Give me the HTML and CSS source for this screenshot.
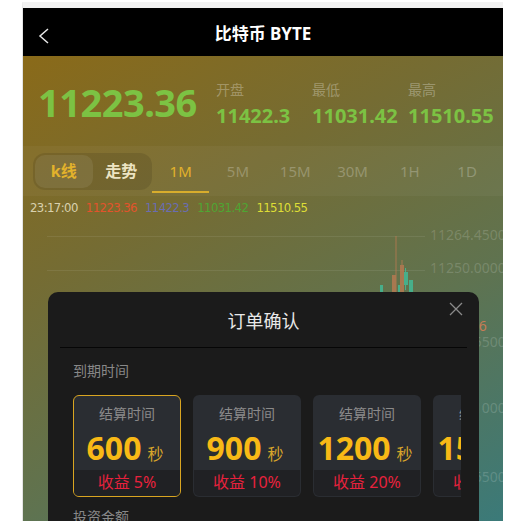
FILE: index.html
```html
<!DOCTYPE html>
<html lang="zh-CN">
<head>
    <meta charset="UTF-8">
    <meta name="viewport" content="width=device-width, initial-scale=1.0">
    <title>比特币 BYTE</title>
    <link rel="stylesheet" href="styles.css">
</head>
<body>

<div class="app">

    <!-- 顶部导航 -->
    <header class="bar">
        <svg class="back" width="12" height="16" viewBox="0 0 12 16">
            <polyline points="10,1 2,8 10,15" fill="none" stroke="#e6e6e6" stroke-width="1.5"/>
        </svg>
        <h1>比特币 BYTE</h1>
    </header>

    <div class="market">
        <!-- 行情 -->
        <section class="quote">
            <div class="last">11223.36</div>
            <div class="stat"><span>开盘</span><b>11422.3</b></div>
            <div class="stat"><span>最低</span><b>11031.42</b></div>
            <div class="stat"><span>最高</span><b>11510.55</b></div>
        </section>

        <!-- 周期切换 -->
        <nav class="tabs">
            <div class="mode">
                <span class="on">k线</span>
                <span>走势</span>
            </div>
            <a class="period on">1M</a>
            <a class="period">5M</a>
            <a class="period">15M</a>
            <a class="period">30M</a>
            <a class="period">1H</a>
            <a class="period">1D</a>
        </nav>

        <div class="ohlc">
            <span class="t">23:17:00</span>
            <span class="c">11223.36</span>
            <span class="o">11422.3</span>
            <span class="l">11031.42</span>
            <span class="h">11510.55</span>
        </div>

        <!-- K线图 -->
        <div class="chart">
            <div class="grid-line" style="top: 16px"></div>
            <div class="grid-line" style="top: 50px"></div>
            <div class="axis" style="top: 8px">11264.4500</div>
            <div class="axis" style="top: 41px">11250.0000</div>
            <div class="axis now" style="top: 99px">11223.36</div>
            <div class="axis" style="top: 115px">11235.5500</div>
            <div class="axis" style="top: 181px">11221.1000</div>
            <div class="axis" style="top: 250px">11206.6500</div>
            <svg class="candles" width="45" height="70" viewBox="0 0 45 70">
                <rect x="5" y="55" width="3" height="8" fill="#3fc39f"/>
                <line x1="21" y1="6" x2="21" y2="64" stroke="#c07a52" stroke-width="1"/>
                <rect x="17" y="45" width="4" height="19" fill="#c07a52"/>
                <line x1="27" y1="30" x2="27" y2="64" stroke="#c07a52" stroke-width="1"/>
                <rect x="25" y="35" width="4" height="29" fill="#c07a52"/>
                <rect x="23" y="55" width="2" height="9" fill="#3fc39f"/>
                <line x1="30.5" y1="38" x2="30.5" y2="60" stroke="#3fc39f" stroke-width="1"/>
                <rect x="29" y="42" width="4" height="13" fill="#3fc39f"/>
                <rect x="34" y="50" width="4" height="14" fill="#3fc39f"/>
            </svg>
        </div>
    </div>

    <!-- 订单确认弹窗 -->
    <div class="modal">
        <div class="modal-head">
            订单确认
            <svg class="close" width="14" height="14" viewBox="0 0 14 14">
                <path d="M1 1 L13 13 M13 1 L1 13" stroke="#8a8a8a" stroke-width="1.3"/>
            </svg>
        </div>
        <div class="modal-body">
            <div class="label">到期时间</div>
            <div class="cards">
                <div class="card on">
                    <div class="card-top">
                        <div class="card-title">结算时间</div>
                        <div class="secs">600<small>秒</small></div>
                    </div>
                    <div class="profit">收益 5%</div>
                </div>
                <div class="card">
                    <div class="card-top">
                        <div class="card-title">结算时间</div>
                        <div class="secs">900<small>秒</small></div>
                    </div>
                    <div class="profit">收益 10%</div>
                </div>
                <div class="card">
                    <div class="card-top">
                        <div class="card-title">结算时间</div>
                        <div class="secs">1200<small>秒</small></div>
                    </div>
                    <div class="profit">收益 20%</div>
                </div>
                <div class="card">
                    <div class="card-top">
                        <div class="card-title">结算时间</div>
                        <div class="secs">1500<small>秒</small></div>
                    </div>
                    <div class="profit">收益 30%</div>
                </div>
            </div>
            <div class="label amount">投资金额</div>
        </div>
    </div>

</div>

</body>
</html>
```

FILE: styles.css
```css
body {
    margin: 0;
    padding: 0;
    background-color: #fff;
    font-family: "Noto Sans", "Noto Sans CJK SC", sans-serif;
    overflow: hidden;
}

.app {
    position: relative;
    width: 480px;
    height: 513px;
    margin: 2px 0 0 22px;
    border-top: 6px solid #f2f2f2;
    border-left: 1px solid #e4e4e4;
    overflow: hidden;
}

/* 顶部导航 */
.bar {
    height: 48px;
    background-color: #000;
    display: flex;
    align-items: center;
    justify-content: center;
    position: relative;
}
.bar h1 {
    margin: 0;
    color: #fff;
    font-size: 17px;
    font-weight: bold;
}
.back {
    position: absolute;
    left: 15px;
    top: 20px;
}

/* 行情区背景 */
.market {
    height: 465px;
    background: linear-gradient(152deg, #8a6a19 0%, #756c33 32%, #5f7350 64%, #3b7a79 100%);
}

.quote {
    height: 90px;
    box-sizing: border-box;
    padding: 24px 0 0 15px;
    display: grid;
    grid-template-columns: 178px 96px 96px 96px;
    align-items: start;
}
.last {
    color: #7cc243;
    font-size: 38px;
    font-weight: bold;
    line-height: 44px;
    letter-spacing: -0.5px;
}
.stat span {
    display: block;
    color: rgba(255, 255, 255, 0.3);
    font-size: 14px;
    line-height: 20px;
}
.stat b {
    display: block;
    margin-top: 3px;
    color: #7cc243;
    font-size: 20px;
    line-height: 26px;
}

/* 周期切换 */
.tabs {
    height: 50px;
    display: flex;
    align-items: center;
    background-color: rgba(255, 255, 255, 0.04);
}
.mode {
    display: flex;
    width: 119px;
    height: 37px;
    box-sizing: border-box;
    margin-left: 10px;
    padding: 2px;
    border-radius: 12px;
    background-color: rgba(0, 0, 0, 0.1);
}
.mode span {
    flex: 1;
    text-align: center;
    line-height: 33px;
    font-size: 16px;
    font-weight: bold;
    color: #ece3c2;
}
.mode span.on {
    color: #e3b22b;
    border-radius: 10px;
    background-color: rgba(255, 255, 255, 0.08);
}
.period {
    align-self: flex-start;
    width: 57.3px;
    height: 47px;
    box-sizing: border-box;
    padding-top: 14px;
    line-height: 22px;
    text-align: center;
    font-size: 15px;
    color: rgba(255, 255, 255, 0.25);
    border-bottom: 2px solid transparent;
}
.period.on {
    color: #e3b22b;
    border-bottom-color: #d8ad2c;
}

/* 开高低收 */
.ohlc {
    height: 24px;
    line-height: 24px;
    padding-left: 7px;
    font-family: "DejaVu Sans", sans-serif;
    font-stretch: condensed;
    font-size: 13px;
    letter-spacing: -0.6px;
    white-space: nowrap;
}
.ohlc span {
    margin-right: 5px;
}
.ohlc .t { color: #d9d1ae; }
.ohlc .c { color: #e2532c; }
.ohlc .o { color: #6a6db0; }
.ohlc .l { color: #4fa533; }
.ohlc .h { color: #dede36; }

/* K线图 */
.chart {
    position: relative;
    height: 301px;
}
.grid-line {
    position: absolute;
    left: 24px;
    width: 378px;
    height: 1px;
    background-color: rgba(255, 255, 255, 0.08);
}
.axis {
    position: absolute;
    left: 407px;
    font-size: 14px;
    line-height: 14px;
    color: rgba(255, 255, 255, 0.17);
    white-space: nowrap;
}
.axis.now {
    left: 404px;
    color: #c77c55;
}
.candles {
    position: absolute;
    left: 352px;
    top: 10px;
    opacity: 0.75;
}

/* 订单确认弹窗 */
.modal {
    position: absolute;
    left: 25px;
    top: 284px;
    width: 431px;
    height: 260px;
    background-color: #1b1b1b;
    border-radius: 10px 10px 0 0;
}
.modal-head {
    position: relative;
    height: 55px;
    margin: 0 12px;
    border-bottom: 1.5px solid #060606;
    display: flex;
    align-items: center;
    justify-content: center;
    font-size: 18px;
    color: #e8e8e8;
}
.close {
    position: absolute;
    top: 10px;
    right: 4px;
}
.modal-body {
    padding: 12px 18px 0 25px;
}
.label {
    font-size: 14px;
    line-height: 22px;
    color: #888;
}
.label.amount {
    margin-top: 9px;
}
.cards {
    display: flex;
    gap: 12px;
    margin-top: 13px;
    overflow: hidden;
}
.card {
    flex: 0 0 108px;
    height: 102px;
    box-sizing: border-box;
    border: 1.5px solid transparent;
    border-radius: 6px;
    overflow: hidden;
    background-color: #2a2d32;
    text-align: center;
}
.card.on {
    border-color: #d9a521;
}
.card-top {
    height: 73.5px;
    box-sizing: border-box;
    padding-top: 7px;
}
.card-title {
    font-size: 14px;
    line-height: 22px;
    color: #8a8a8a;
}
.secs {
    margin-top: 5px;
    padding-right: 4px;
    font-size: 32px;
    font-weight: bold;
    line-height: 36px;
    color: #f8b916;
    white-space: nowrap;
}
.secs small {
    margin-left: 6px;
    font-size: 16px;
    font-weight: normal;
    color: #d7a52a;
}
.profit {
    height: 27px;
    line-height: 25px;
    background-color: #202124;
    font-size: 16px;
    color: #e8213d;
}
```
